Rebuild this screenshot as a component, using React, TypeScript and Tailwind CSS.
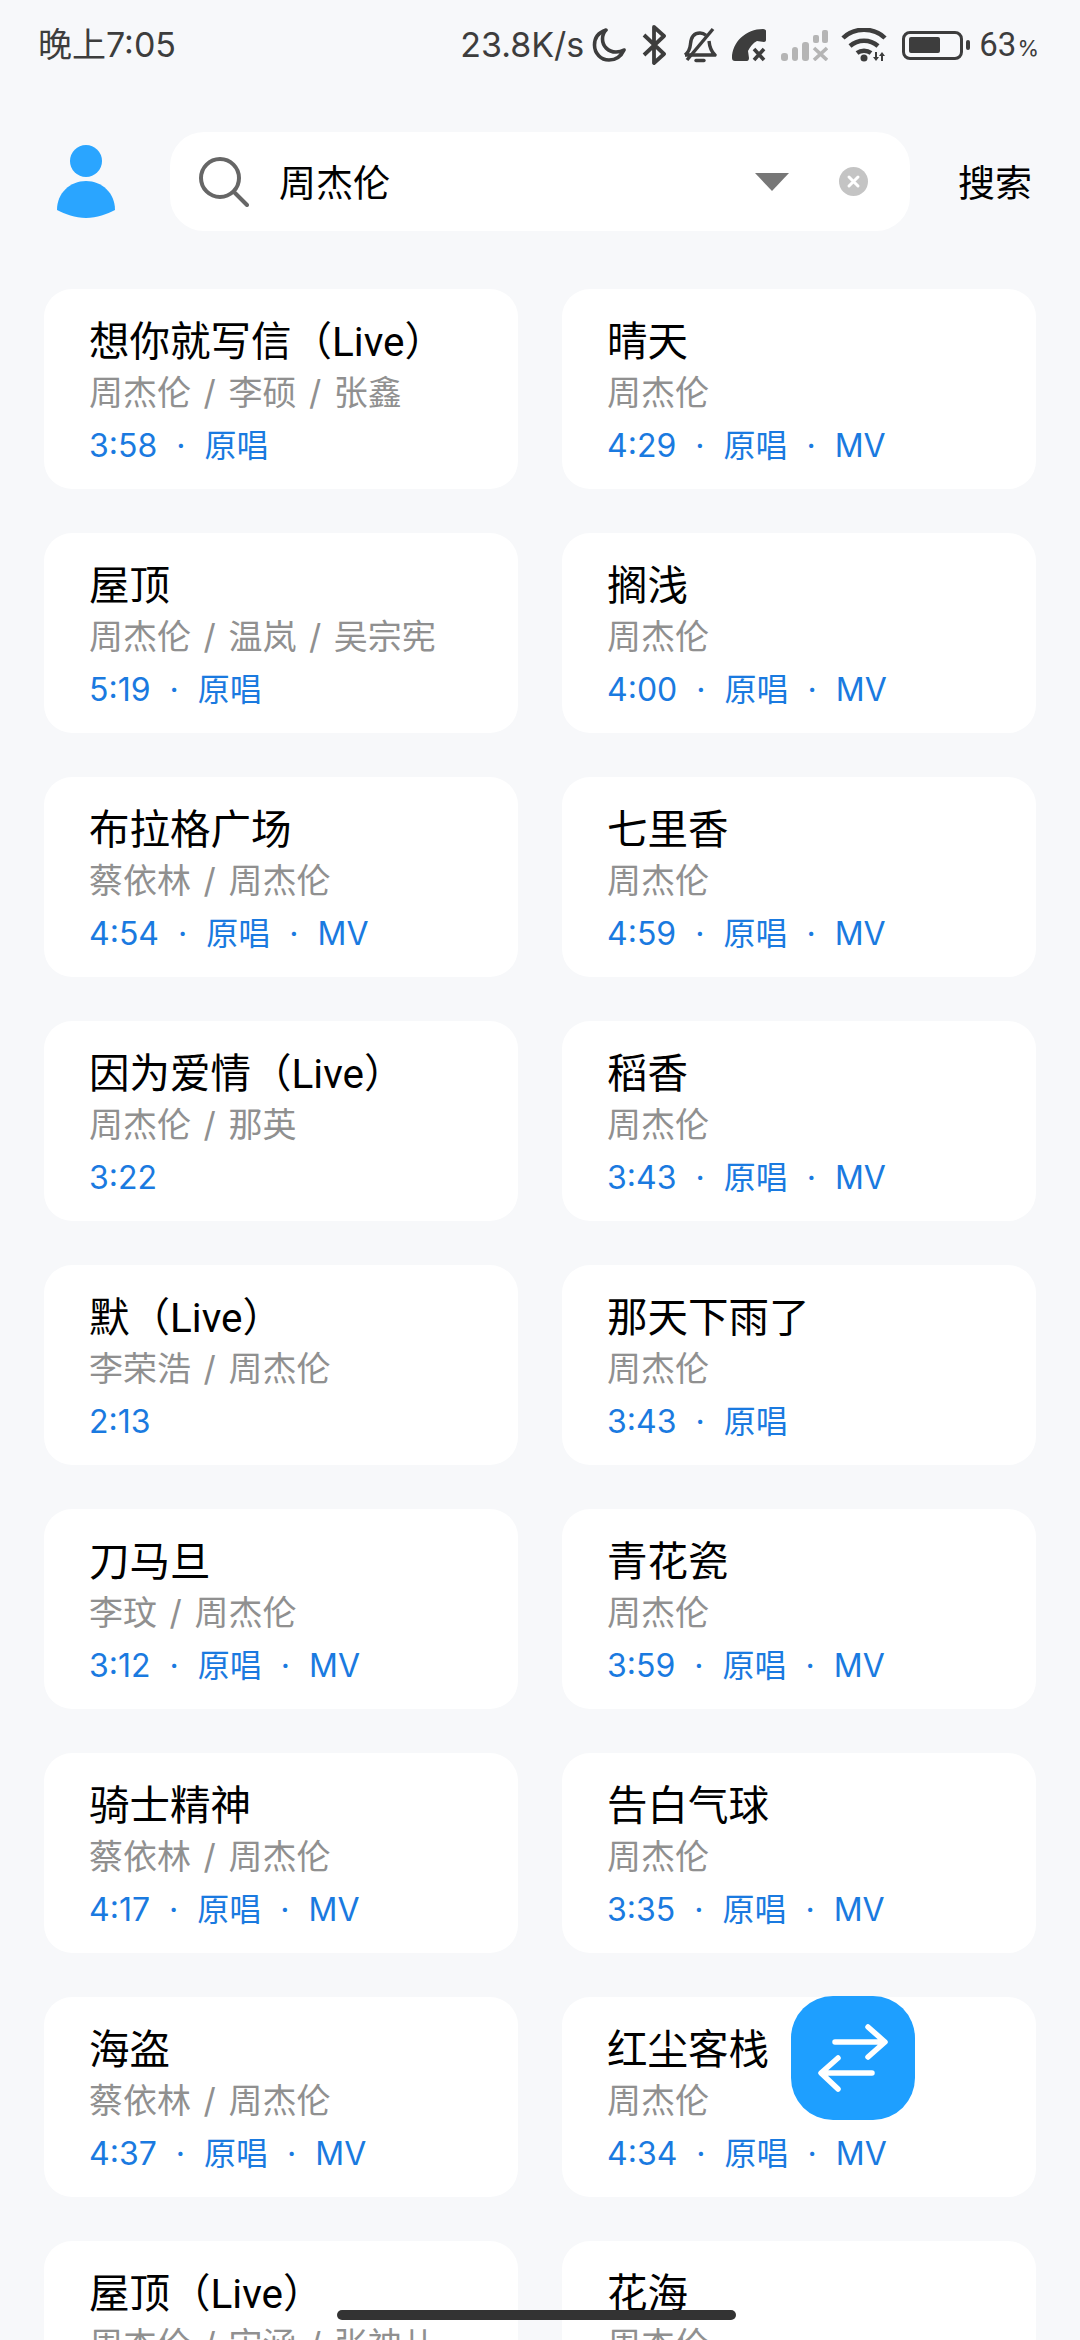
const sans = "font-['Inter','Noto_Sans_CJK_SC',sans-serif]";
const titleFont = "font-['Roboto','Noto_Sans_CJK_SC',sans-serif]";

type Song = { title: string; artist: string; time: string; tags: string[] };

const songs: Song[] = [
  { title: "想你就写信（Live）", artist: "周杰伦 / 李硕 / 张鑫", time: "3:58", tags: ["原唱"] },
  { title: "晴天", artist: "周杰伦", time: "4:29", tags: ["原唱", "MV"] },
  { title: "屋顶", artist: "周杰伦 / 温岚 / 吴宗宪", time: "5:19", tags: ["原唱"] },
  { title: "搁浅", artist: "周杰伦", time: "4:00", tags: ["原唱", "MV"] },
  { title: "布拉格广场", artist: "蔡依林 / 周杰伦", time: "4:54", tags: ["原唱", "MV"] },
  { title: "七里香", artist: "周杰伦", time: "4:59", tags: ["原唱", "MV"] },
  { title: "因为爱情（Live）", artist: "周杰伦 / 那英", time: "3:22", tags: [] },
  { title: "稻香", artist: "周杰伦", time: "3:43", tags: ["原唱", "MV"] },
  { title: "默（Live）", artist: "李荣浩 / 周杰伦", time: "2:13", tags: [] },
  { title: "那天下雨了", artist: "周杰伦", time: "3:43", tags: ["原唱"] },
  { title: "刀马旦", artist: "李玟 / 周杰伦", time: "3:12", tags: ["原唱", "MV"] },
  { title: "青花瓷", artist: "周杰伦", time: "3:59", tags: ["原唱", "MV"] },
  { title: "骑士精神", artist: "蔡依林 / 周杰伦", time: "4:17", tags: ["原唱", "MV"] },
  { title: "告白气球", artist: "周杰伦", time: "3:35", tags: ["原唱", "MV"] },
  { title: "海盗", artist: "蔡依林 / 周杰伦", time: "4:37", tags: ["原唱", "MV"] },
  { title: "红尘客栈", artist: "周杰伦", time: "4:34", tags: ["原唱", "MV"] },
  { title: "屋顶（Live）", artist: "周杰伦 / 宋涵 / 张神儿", time: "4:51", tags: ["原唱"] },
  { title: "花海", artist: "周杰伦", time: "4:24", tags: ["原唱", "MV"] },
];

function StatusIcons() {
  return (
    <div className="flex items-center">
      {/* moon */}
      <svg width="34" height="36" viewBox="0 0 34 36" fill="none" stroke="#3d3d3d" strokeWidth="3.600" className="ml-[8px]">
        <path d="M14 3C6.500 5.500 2.500 11 2.500 18c0 8.500 6.500 15 14.500 15 7 0 12-3.500 15-10-2.500 1.500-5 2-8 2-8 0-13.500-6-13.500-13 0-3.500 1-6.500 3.500-9z" strokeLinejoin="round" />
      </svg>
      {/* bluetooth */}
      <svg width="24" height="40" viewBox="0 0 24 40" fill="none" stroke="#3d3d3d" strokeWidth="3.800" className="ml-[16px]">
        <path d="M2 10l20 19-10 9V2l10 9L2 30" strokeLinejoin="round" />
      </svg>
      {/* muted bell */}
      <svg width="34" height="36" viewBox="0 0 34 36" fill="none" stroke="#3d3d3d" strokeWidth="3.400" className="ml-[17px]">
        <path d="M2 28c4-3 5-6 5.500-11C8 10 11 6 17 6c2.500 0 4.500 1 6 2.300M26 14c.5 5 1.500 10 6 14H2" strokeLinejoin="round" />
        <path d="M13 33.500h8" strokeLinecap="round" />
        <path d="M4 33L30 2" />
      </svg>
      {/* missed call */}
      <svg width="34" height="34" viewBox="0 0 34 34" className="ml-[15px]">
        <path d="M31 1c2 0 3 1 3 2v9c0 1-1 2-2 2l-7-1c-4 2-7 6-9 10l1 7c0 2-1 3-2 3H3c-2 0-3-1-3-3C0 14 14 1 31 1z" fill="#3d3d3d" />
        <path d="M22 21l10 11M32 21L22 32" stroke="#3d3d3d" strokeWidth="3.600" fill="none" />
      </svg>
      {/* no signal */}
      <svg width="47" height="31" viewBox="0 0 47 31" fill="#b5b5b5" className="ml-[15px]">
        <rect x="0" y="23" width="7" height="8" rx="3" />
        <rect x="11" y="17" width="6" height="14" rx="3" />
        <rect x="21" y="12" width="7" height="19" rx="3" />
        <rect x="32" y="5" width="6" height="8" rx="2" />
        <rect x="41" y="0" width="6" height="13" rx="2" />
        <path d="M33 18l13 12M46 18L33 30" stroke="#b5b5b5" strokeWidth="3.600" fill="none" />
      </svg>
      {/* wifi */}
      <svg width="46" height="34" viewBox="0 0 46 34" fill="none" stroke="#3d3d3d" strokeWidth="4.500" className="ml-[13px]">
        <path d="M2 10C13 -1 33 -1 44 10" />
        <path d="M9 18c8-7 20-7 28 0" />
        <path d="M16 25c4-3 10-3 14 0" />
        <circle cx="23" cy="30" r="3.500" fill="#3d3d3d" stroke="none" />
        <path d="M35 24v6M41 27v6" strokeWidth="2" />
        <path d="M32 29h6l-3 4zM38 28h6l-3-4z" fill="#3d3d3d" stroke="none" />
      </svg>
      {/* battery */}
      <div className="ml-[15px] flex items-center">
        <div className="flex h-[29px] w-[61px] items-center rounded-[8px] border-[3px] border-[#3d3d3d] px-[4px]">
          <div className="h-[16px] w-[31px] rounded-[2px] bg-[#3d3d3d]" />
        </div>
        <div className="ml-[3px] h-[10px] w-[4px] rounded-[2px] bg-[#3d3d3d]" />
      </div>
      <span className={`ml-[9px] text-[33px] leading-[40px] text-[#3d3d3d] ${titleFont}`}>63</span>
      <span className="ml-[1px] mt-[6px] text-[22px] leading-[28px] text-[#3d3d3d]">%</span>
    </div>
  );
}

function StatusBar() {
  return (
    <div className="flex h-[92px] items-center justify-between pb-[2px] pl-[38px] pr-[41px]">
      <span className="text-[34px] leading-[40px] text-[#3d3d3d]">晚上7:05</span>
      <div className="flex items-center">
        <span className="text-[34px] leading-[40px] text-[#3d3d3d]">23.8K/s</span>
        <StatusIcons />
      </div>
    </div>
  );
}

function SearchHeader() {
  return (
    <div className="mt-[40px] flex h-[99px] items-center pl-[57px]">
      <svg width="58" height="74" viewBox="0 0 58 74" fill="#2aa5ff">
        <circle cx="29" cy="16" r="16" />
        <path d="M0 65C0 48 13 36 29 36s29 12 29 29c-8 4-18 8-29 8S8 69 0 65z" />
      </svg>
      <div className="ml-[55px] flex h-[99px] w-[740px] items-center rounded-[34px] bg-white pl-[29px]">
        <svg width="50" height="50" viewBox="0 0 50 50" fill="none" stroke="#666666" strokeWidth="4">
          <circle cx="21" cy="21" r="19" />
          <path d="M36 36l12 12" strokeLinecap="round" />
        </svg>
        <span className="ml-[30px] mt-[4px] text-[37px] leading-[48px] text-black">周杰伦</span>
        <div className="ml-auto mt-[1px] h-0 w-0 border-x-[17px] border-t-[18px] border-x-transparent border-t-[#777777]" />
        <svg width="29" height="29" viewBox="0 0 29 29" className="ml-[50px] mr-[42px]">
          <circle cx="14.500" cy="14.500" r="14.500" fill="#c4c4c4" />
          <path d="M10 10l9 9M19 10l-9 9" stroke="#ffffff" strokeWidth="3" strokeLinecap="round" />
        </svg>
      </div>
      <span className="ml-[48px] mt-[4px] text-[37px] leading-[48px] text-black">搜索</span>
    </div>
  );
}

function SongCard({ song }: { song: Song }) {
  return (
    <div className="h-[200px] rounded-[28px] bg-white pl-[45px] pt-[25px]">
      <div className={`whitespace-nowrap text-[40.500px] leading-[56px] text-black ${titleFont}`}>{song.title}</div>
      <div className="whitespace-nowrap text-[34px] leading-[46px] text-[#909090] [word-spacing:3px]">{song.artist}</div>
      <div className="mt-[7px] flex items-center gap-[19px] whitespace-nowrap text-[32px] leading-[46px] text-[#1a7ae0]">
        <span>{song.time}</span>
        {song.tags.map((tag) => (
          <span key={tag} className="flex items-center gap-[19px]">
            <span>·</span>
            <span>{tag}</span>
          </span>
        ))}
      </div>
    </div>
  );
}

function SwapButton() {
  return (
    <div className="absolute left-[791px] top-[1996px] flex h-[124px] w-[124px] items-center justify-center rounded-[42px] bg-[#1e9fff]">
      <svg width="124" height="124" viewBox="0 0 124 124" fill="none" stroke="#ffffff" strokeWidth="5.500" strokeLinecap="round" strokeLinejoin="round">
        <path d="M44 46h49M77 31l17 15-17 15" />
        <path d="M81 77H31M47 62L30 77l17 16" />
      </svg>
    </div>
  );
}

export default function App() {
  return (
    <div className={`relative h-[2340px] w-[1080px] overflow-hidden bg-[#f7f8fa] ${sans}`}>
      <StatusBar />
      <SearchHeader />
      <div className="mt-[58px] grid grid-cols-[474px_474px] gap-x-[44px] gap-y-[44px] pl-[44px]">
        {songs.map((song) => (
          <SongCard key={song.title} song={song} />
        ))}
      </div>
      <SwapButton />
      <div className="absolute bottom-[20px] left-[337px] h-[10px] w-[399px] rounded-full bg-[#333333]" />
    </div>
  );
}
